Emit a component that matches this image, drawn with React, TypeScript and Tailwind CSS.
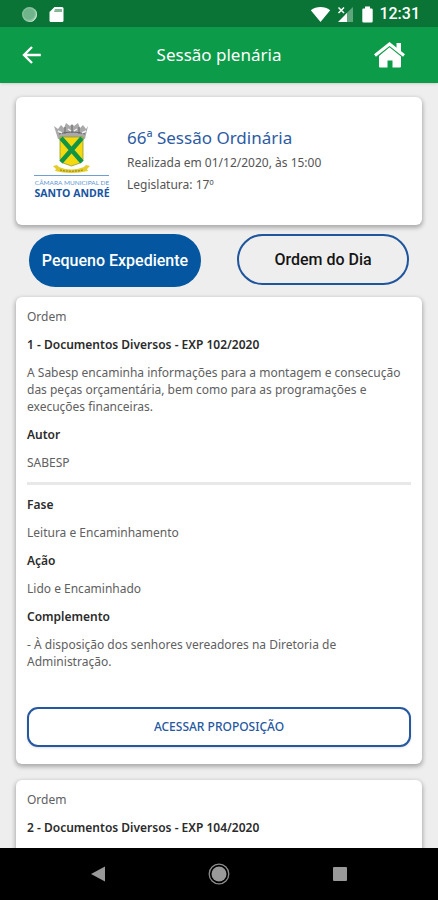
import type { ReactNode } from "react";

function StatusBar() {
  return (
    <div className="flex h-[27px] shrink-0 items-center justify-between bg-[#0a7437] pl-[21px] pr-[18px] pt-px text-white">
      <div className="flex items-center gap-[11px]">
        <svg width="17" height="17" viewBox="0 0 17 17" aria-hidden="true">
          <circle cx="8.5" cy="8.5" r="7.5" fill="#8cc3a1" />
          <path d="M13 2.5a7.5 7.5 0 0 1-8 12.6 7.7 7.7 0 0 0 8-12.6z" fill="#d5eadc" />
          <circle cx="8" cy="8" r="5.8" fill="#6fb48a" />
        </svg>
        <svg width="15" height="17" viewBox="0 0 15 17" aria-hidden="true">
          <path d="M5.5 1H13a1.5 1.5 0 0 1 1.5 1.5v12A1.5 1.5 0 0 1 13 16H2a1.5 1.5 0 0 1-1.5-1.5V6z" fill="#fff" />
          <path d="M6 3h7v3H5z" fill="#86b598" />
        </svg>
      </div>
      <div className="flex items-center">
        <svg width="21" height="17" viewBox="0 0 21 17" aria-hidden="true">
          <path d="M.8 4.3C6.500 0 14.500 0 20.200 4.300L10.500 16z" fill="#fff" />
        </svg>
        <svg className="ml-[6px]" width="17" height="17" viewBox="0 0 17 17" aria-hidden="true">
          <path d="M16 1v15H8V8.500z" fill="#5fa67c" />
          <path d="M10 7v9H1z" fill="#fff" />
          <path d="M1.500 1.500l5.500 5.500M7 1.500L1.500 7" stroke="#fff" strokeWidth="1.500" />
        </svg>
        <svg className="ml-[8px]" width="11" height="17" viewBox="0 0 11 17" aria-hidden="true">
          <path d="M3 .5h5v2h1.500a1.200 1.200 0 0 1 1.200 1.200v11.600a1.200 1.200 0 0 1-1.200 1.200h-8A1.200 1.200 0 0 1 .3 15.300V3.700a1.200 1.200 0 0 1 1.200-1.200H3z" fill="#fff" />
        </svg>
        <span className="ml-[6px] font-[Roboto] text-base font-medium leading-5">12:31</span>
      </div>
    </div>
  );
}

function Header() {
  return (
    <header className="flex h-14 shrink-0 items-center justify-between bg-[#0c9b49] pl-5 pr-8 text-white shadow-sm">
      <button type="button" aria-label="Voltar" className="flex w-12 items-center">
        <svg width="24" height="24" viewBox="0 0 24 24" fill="none" stroke="#fff" strokeWidth="2.400" aria-hidden="true">
          <path d="M20.800 12H4.500M12 4L4 12l8 8" />
        </svg>
      </button>
      <h1 className="text-[17px]">Sessão plenária</h1>
      <button type="button" aria-label="Início" className="flex w-9 justify-end">
        <svg width="32" height="28" viewBox="0 0 32 28" fill="#fff" aria-hidden="true">
          <path d="M15.500 6.300L27 15.500V25.500a1 1 0 0 1-1 1H18.500V19.500h-5v7H6a1 1 0 0 1-1-1V15z" />
          <path d="M1 14.500L15.500 3 30 14.500" fill="none" stroke="#fff" strokeWidth="3" />
          <path d="M22.500 2H27V11L22.500 7.500z" />
        </svg>
      </button>
    </header>
  );
}

function Crest() {
  return (
    <svg className="shrink-0" width="76" height="80" viewBox="0 0 76 80" role="img" aria-label="Câmara Municipal de Santo André">
      <path d="M20 5l4 3 3-4 3 3 2-5 4 3 2-2 2 2 4-3 2 5 3-3 3 4 2-3-3 13H24z" fill="#a9a9a9" />
      <path d="M25 13q13-4 26 0M31 6v7M38 4v8M45 6v7" fill="none" stroke="#666" strokeWidth="1" />
      <path d="M24 10l4 2M52 10l-4 2M34 8l3 2M43 8l-3 2" stroke="#eee" strokeWidth="1.500" />
      <path d="M26 16h23v22q0 3-3 4l-8.500 3-8.500-3q-3-1-3-4z" fill="#f5d90f" stroke="#8d9a2d" strokeWidth=".8" />
      <path d="M27 17l21 24M48 17L27 41" stroke="#119444" strokeWidth="4.500" />
      <path d="M19 45l4-1 2 2q12 5 25 0l2-2 4 1-3 3 1 2q-17 4-33 0l1-2z" fill="#e4cd29" />
      <path d="M26 49q11 2.500 23 0" fill="none" stroke="#968a28" strokeWidth="1.200" strokeDasharray="2 1" />
      <path d="M0 54.500h75" stroke="#6f9fd0" strokeWidth="1" />
      <text x="38" y="64" textAnchor="middle" fontFamily="Lato, sans-serif" fontSize="6.500" fill="#5b96d4">CÂMARA MUNICIPAL DE</text>
      <text x="38" y="76" textAnchor="middle" fontFamily="'Open Sans', sans-serif" fontWeight="700" fontSize="10.500" fill="#1755a2">SANTO ANDRÉ</text>
    </svg>
  );
}

function Card({ children, className = "" }: { children: ReactNode; className?: string }) {
  return (
    <section className={`rounded-md bg-white shadow-[0_2px_4px_1px_rgba(0,0,0,0.28)] ${className}`}>
      {children}
    </section>
  );
}

function Label({ children }: { children: ReactNode }) {
  return <h3 className="font-semibold text-[#2b2b2b]">{children}</h3>;
}

const cardText = "flex flex-col gap-[11px] px-[11px] pt-[11px] text-xs leading-[17px] text-[#606060]";

export default function App() {
  return (
    <div className="flex h-screen flex-col overflow-hidden bg-[#eeeeee] font-['Noto_Sans',sans-serif]">
      <StatusBar />
      <Header />
      <main className="min-h-0 flex-1 overflow-hidden px-4 pt-[14px]">
        <Card className="flex h-32 items-center gap-[17px] pl-[18px]">
          <Crest />
          <div className="pb-[3px] text-xs leading-[22px] text-[#555]">
            <h2 className="text-[17px] leading-7 text-[#2c5ba3]">66ª Sessão Ordinária</h2>
            <p>Realizada em 01/12/2020, às 15:00</p>
            <p>Legislatura: 17º</p>
          </div>
        </Card>

        <div className="grid grid-cols-2 items-start gap-9 px-[13px] pt-[9px] font-[Roboto] text-base font-medium">
          <button type="button" className="h-[53px] whitespace-nowrap rounded-full bg-[#03569f] text-white">
            Pequeno Expediente
          </button>
          <button type="button" className="h-[51px] whitespace-nowrap rounded-full border-2 border-[#1f559d] text-[#151515]">
            Ordem do Dia
          </button>
        </div>

        <Card className="mt-[10px] pb-[17px]">
          <div className={cardText}>
            <p>Ordem</p>
            <Label>1 - Documentos Diversos - EXP 102/2020</Label>
            <p>
              A Sabesp encaminha informações para a montagem e consecução das peças orçamentária, bem como para as
              programações e execuções financeiras.
            </p>
            <Label>Autor</Label>
            <p>SABESP</p>
            <hr className="h-[3px] border-0 bg-[#e8e8e8]" />
            <Label>Fase</Label>
            <p>Leitura e Encaminhamento</p>
            <Label>Ação</Label>
            <p>Lido e Encaminhado</p>
            <Label>Complemento</Label>
            <p>- À disposição dos senhores vereadores na Diretoria de Administração.</p>
          </div>
          <div className="px-[11px] pt-[37px]">
            <button
              type="button"
              className="h-10 w-full rounded-[11px] border-2 border-[#2558a0] bg-white text-xs font-medium text-[#2558a0] shadow-sm"
            >
              ACESSAR PROPOSIÇÃO
            </button>
          </div>
        </Card>

        <Card className="mt-4 pb-6">
          <div className={cardText}>
            <p>Ordem</p>
            <Label>2 - Documentos Diversos - EXP 104/2020</Label>
          </div>
        </Card>
      </main>

      <nav className="flex h-[52px] shrink-0 items-center justify-around bg-black px-[38px]">
        <button type="button" aria-label="Voltar">
          <svg width="22" height="22" viewBox="0 0 22 22" aria-hidden="true">
            <path d="M18 3.500v15L4 11z" fill="#999" />
          </svg>
        </button>
        <button type="button" aria-label="Tela inicial">
          <svg width="22" height="22" viewBox="0 0 22 22" aria-hidden="true">
            <circle cx="11" cy="11" r="9.800" fill="none" stroke="#8c8c8c" strokeWidth="1.300" />
            <circle cx="11" cy="11" r="7.500" fill="#999" />
          </svg>
        </button>
        <button type="button" aria-label="Recentes">
          <svg width="22" height="22" viewBox="0 0 22 22" aria-hidden="true">
            <rect x="4" y="4" width="14" height="14" rx="1" fill="#999" />
          </svg>
        </button>
      </nav>
    </div>
  );
}
